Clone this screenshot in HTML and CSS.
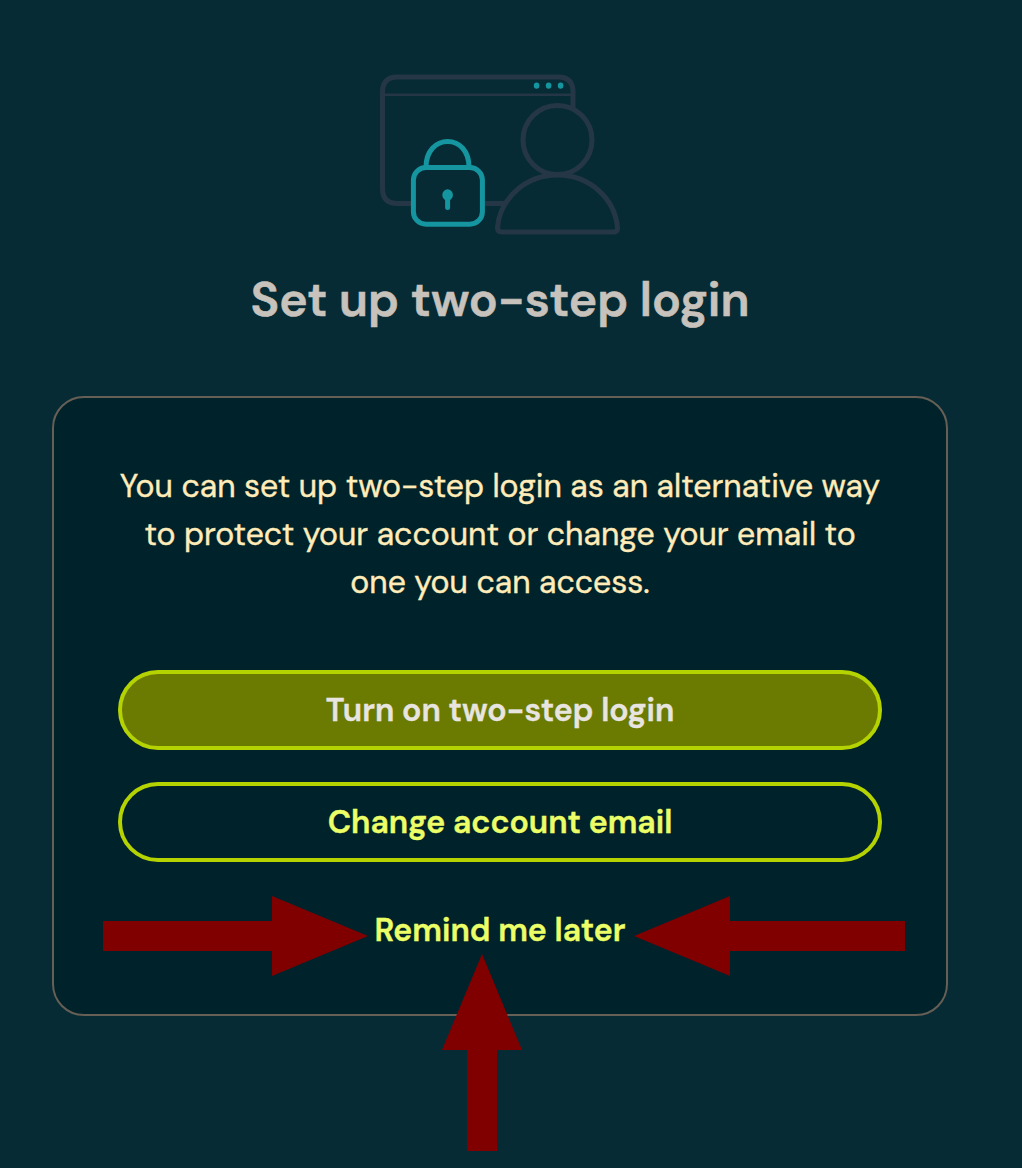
FILE: index.html
```html
<!DOCTYPE html>
<html lang="en">
<head>
<meta charset="utf-8">
<title>Set up two-step login</title>
<link rel="stylesheet" href="styles.css">
</head>
<body>
<main class="page">
  <svg class="hero" viewBox="0 0 260 180" fill="none" aria-hidden="true">
    <g stroke="#253746" stroke-width="5">
      <path d="M203 43V27Q203 12 188 12H27.500Q12.500 12 12.500 27V123.500Q12.500 138.500 27.500 138.500H42M114 138.500H136"/>
      <path d="M13 29.800H203" stroke-width="2.600"/>
      <circle cx="187.500" cy="75" r="34.500"/>
      <path d="M187.500 110C155 110 130 134 127.500 162.500Q127.500 167 132 167H243Q248 167 247.500 162.500C245 134 220 110 187.500 110Z"/>
    </g>
    <g fill="#14959f">
      <ellipse cx="166.600" cy="20.600" rx="2.800" ry="3.200"/>
      <ellipse cx="178.600" cy="20.600" rx="2.800" ry="3.200"/>
      <ellipse cx="190.600" cy="20.600" rx="2.800" ry="3.200"/>
      <ellipse cx="77.600" cy="130" rx="5.300" ry="5.800"/>
    </g>
    <g stroke="#14959f" stroke-width="5">
      <rect x="43.400" y="102.500" width="69" height="56.700" rx="12.500"/>
      <path d="M56 102C56 86 66 76.500 77.700 76.500S99 86 99 102"/>
      <path d="M77.600 132V142.500" stroke-linecap="round"/>
    </g>
  </svg>
  <h1 class="title">Set up two-step login</h1>
  <section class="card">
    <p class="message">You can set up two-step login as an alternative way to protect your account or change your email to one you can access.</p>
    <div class="actions">
      <button class="button primary" type="button">Turn on two-step login</button>
      <button class="button secondary" type="button">Change account email</button>
    </div>
    <a class="later">Remind me later</a>
  </section>
</main>
<svg class="arrows" viewBox="0 0 1022 1168" fill="#800000" aria-hidden="true">
  <path d="M103 921H272V896L368 936L272 976V951H103Z"/>
  <path d="M905 921H730V896L634 936L730 976V951H905Z"/>
  <path d="M467 1151V1050H442L482 954L522 1050H497V1151Z"/>
</svg>
</body>
</html>
```
FILE: styles.css
```css
* {
  box-sizing: border-box;
}

body {
  margin: 0;
  background: #072b34;
  font-family: "DM Sans", Lato, sans-serif;
}

.page {
  width: 1000px;
  height: 1168px;
  padding: 65px 52px 0;
}

.hero {
  display: block;
  width: 260px;
  height: 180px;
  margin: 0 auto;
}

.title {
  margin: 23px 0 64px;
  color: #c8c2bc;
  font-size: 48px;
  font-weight: 600;
  line-height: 64px;
  text-align: center;
  white-space: nowrap;
  -webkit-text-stroke: 0.6px currentColor;
}

.card {
  height: 620px;
  padding: 64px;
  border: 2px solid #665f56;
  border-radius: 32px;
  background: #00222a;
  text-align: center;
}

.message {
  margin: 0 0 64px;
  color: #ffecb9;
  font-size: 32px;
  line-height: 48px;
  -webkit-text-stroke: 0.4px currentColor;
}

.actions {
  display: grid;
  gap: 32px;
}

.button {
  height: 80px;
  padding: 0;
  border: 4px solid #b5d300;
  border-radius: 40px;
  font: 600 32px/48px "DM Sans", Lato, sans-serif;
  -webkit-text-stroke: 0.4px currentColor;
}

.primary {
  background: #6b7a00;
  color: #e8e5e1;
}

.secondary {
  background: transparent;
  color: #ecff66;
}

.later {
  display: block;
  margin-top: 44px;
  color: #ecff66;
  font-size: 32px;
  font-weight: 600;
  line-height: 48px;
  -webkit-text-stroke: 0.4px currentColor;
}

.arrows {
  position: absolute;
  top: 0;
  left: 0;
  width: 1022px;
  height: 1168px;
  pointer-events: none;
}
```
